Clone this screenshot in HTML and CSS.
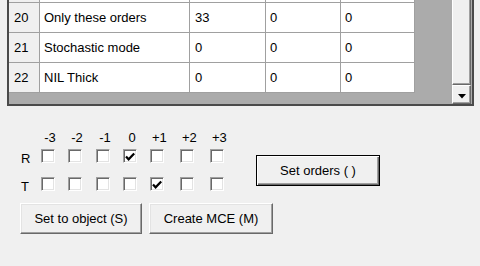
FILE: index.html
```html
<!DOCTYPE html>
<html>
<head>
<meta charset="utf-8">
<link rel="stylesheet" href="styles.css">
</head>
<body>
<div class="grid">
  <div class="table">
    <div class="row">
      <div class="cell hdr"></div><div class="cell name"></div><div class="cell c1"></div><div class="cell c2"></div><div class="cell c3"></div>
    </div>
    <div class="row">
      <div class="cell hdr">20</div><div class="cell name">Only these orders</div><div class="cell c1">33</div><div class="cell c2">0</div><div class="cell c3">0</div>
    </div>
    <div class="row">
      <div class="cell hdr">21</div><div class="cell name">Stochastic mode</div><div class="cell c1">0</div><div class="cell c2">0</div><div class="cell c3">0</div>
    </div>
    <div class="row">
      <div class="cell hdr">22</div><div class="cell name">NIL Thick</div><div class="cell c1">0</div><div class="cell c2">0</div><div class="cell c3">0</div>
    </div>
  </div>
  <div class="scroll">
    <div class="thumb"></div>
    <div class="sbtn"><svg width="8" height="5" viewBox="0 0 8 5"><path d="M0 0H8L4 4.5Z" fill="#000"/></svg></div>
  </div>
</div>

<div class="orders">
  <span></span>
  <span class="lbl">-3</span><span class="lbl">-2</span><span class="lbl">-1</span><span class="lbl">0</span><span class="lbl">+1</span><span class="lbl">+2</span><span class="lbl">+3</span>
  <span class="rl">R</span>
  <span class="cb"></span><span class="cb"></span><span class="cb"></span><span class="cb on"><svg width="12" height="12" viewBox="0 0 12 12"><path d="M2 5.5L4.6 8.3L10.2 2.4" stroke="#000" stroke-width="2.2" fill="none"/></svg></span><span class="cb"></span><span class="cb"></span><span class="cb"></span>
  <span class="rl">T</span>
  <span class="cb"></span><span class="cb"></span><span class="cb"></span><span class="cb"></span><span class="cb on"><svg width="12" height="12" viewBox="0 0 12 12"><path d="M2 5.5L4.6 8.3L10.2 2.4" stroke="#000" stroke-width="2.2" fill="none"/></svg></span><span class="cb"></span><span class="cb"></span>
  <button class="btn def setorders">Set orders ( )</button>
</div>

<div class="actions">
  <button class="btn b1">Set to object (S)</button>
  <button class="btn b2">Create MCE (M)</button>
</div>
</body>
</html>
```
FILE: styles.css
```css
html, body {
  margin: 0;
  padding: 0;
  background: #f0f0f0;
  font-family: "Liberation Sans", Arial, sans-serif;
  font-size: 13px;
  color: #000;
  overflow: hidden;
}
.grid {
  display: flex;
  margin: -29px 0 0 7px;
  width: 463px;
  border: 2px solid #4a4a4a;
  background: #ababab;
}
.table {
  width: 443px;
  height: 131px;
  background: #ababab;
}
.row {
  display: flex;
  height: 30px;
}
.cell {
  box-sizing: border-box;
  height: 30px;
  border-right: 1px solid #a0a0a0;
  border-bottom: 1px solid #a0a0a0;
  background: #fff;
  line-height: 29px;
  white-space: nowrap;
  overflow: hidden;
}
.hdr {
  width: 31px;
  background: #f0f0f0;
  padding-left: 5px;
}
.name { width: 150px; padding-left: 4px; }
.c1 { width: 76px; padding-left: 5px; }
.c2 { width: 75px; padding-left: 4px; }
.c3 { width: 74px; padding-left: 4px; }
.scroll {
  width: 19px;
  display: flex;
  flex-direction: column;
}
.thumb {
  flex: 1;
  box-sizing: border-box;
  background: #f0f0f0;
  border-left: 1px solid #fff;
  border-top: 1px solid #fff;
  border-right: 1px solid #696969;
  border-bottom: 1px solid #696969;
  box-shadow: inset -1px -1px 0 #a0a0a0;
}
.sbtn {
  height: 19px;
  box-sizing: border-box;
  background: #f0f0f0;
  border-left: 1px solid #fff;
  border-top: 1px solid #fff;
  border-right: 1px solid #696969;
  border-bottom: 1px solid #696969;
  box-shadow: inset -1px -1px 0 #a0a0a0;
  display: flex;
  align-items: center;
  justify-content: center;
  padding-top: 4px;
}
.sbtn svg { display: block; }

.orders {
  display: grid;
  grid-template-columns: 21px 27px 28px 27px 27px 30px 30px 30px auto;
  grid-template-rows: 19px 28px 14px;
  margin: 24px 0 0 20px;
}
.lbl {
  line-height: 15px;
  padding-left: 2px;
  width: 14px;
  text-align: center;
  white-space: nowrap;
}
.rl {
  grid-column: 1;
  line-height: 15px;
  padding-left: 1px;
  margin-top: 2px;
}
.cb {
  box-sizing: border-box;
  width: 14px;
  height: 14px;
  background: #fff;
  border: 1px solid;
  border-color: #a0a0a0 #fff #fff #a0a0a0;
  box-shadow: inset 1px 1px 0 #696969, inset -1px -1px 0 #e3e3e3;
  display: flex;
  align-items: center;
  justify-content: center;
}
.cb svg { display: block; margin-top: 1px; }
.btn {
  box-sizing: border-box;
  height: 31px;
  font-family: "Liberation Sans", Arial, sans-serif;
  font-size: 13px;
  color: #000;
  background: #f0f0f0;
  border: 1px solid;
  border-color: #fff #696969 #696969 #fff;
  box-shadow: inset -1px -1px 0 #a0a0a0, inset 1px 1px 0 #e3e3e3;
  padding: 0;
}
.btn.def {
  border: 1px solid #000;
  box-shadow: inset 1px 1px 0 #fff, inset -1px -1px 0 #696969, inset -2px -2px 0 #a0a0a0;
}
.setorders {
  grid-column: 9;
  grid-row: 2 / span 2;
  align-self: center;
  width: 124px;
  margin-left: 16px;
}
.actions {
  display: flex;
  gap: 7px;
  margin: 12px 0 0 20px;
}
.b1 { width: 122px; }
.b2 { width: 124px; }
```
